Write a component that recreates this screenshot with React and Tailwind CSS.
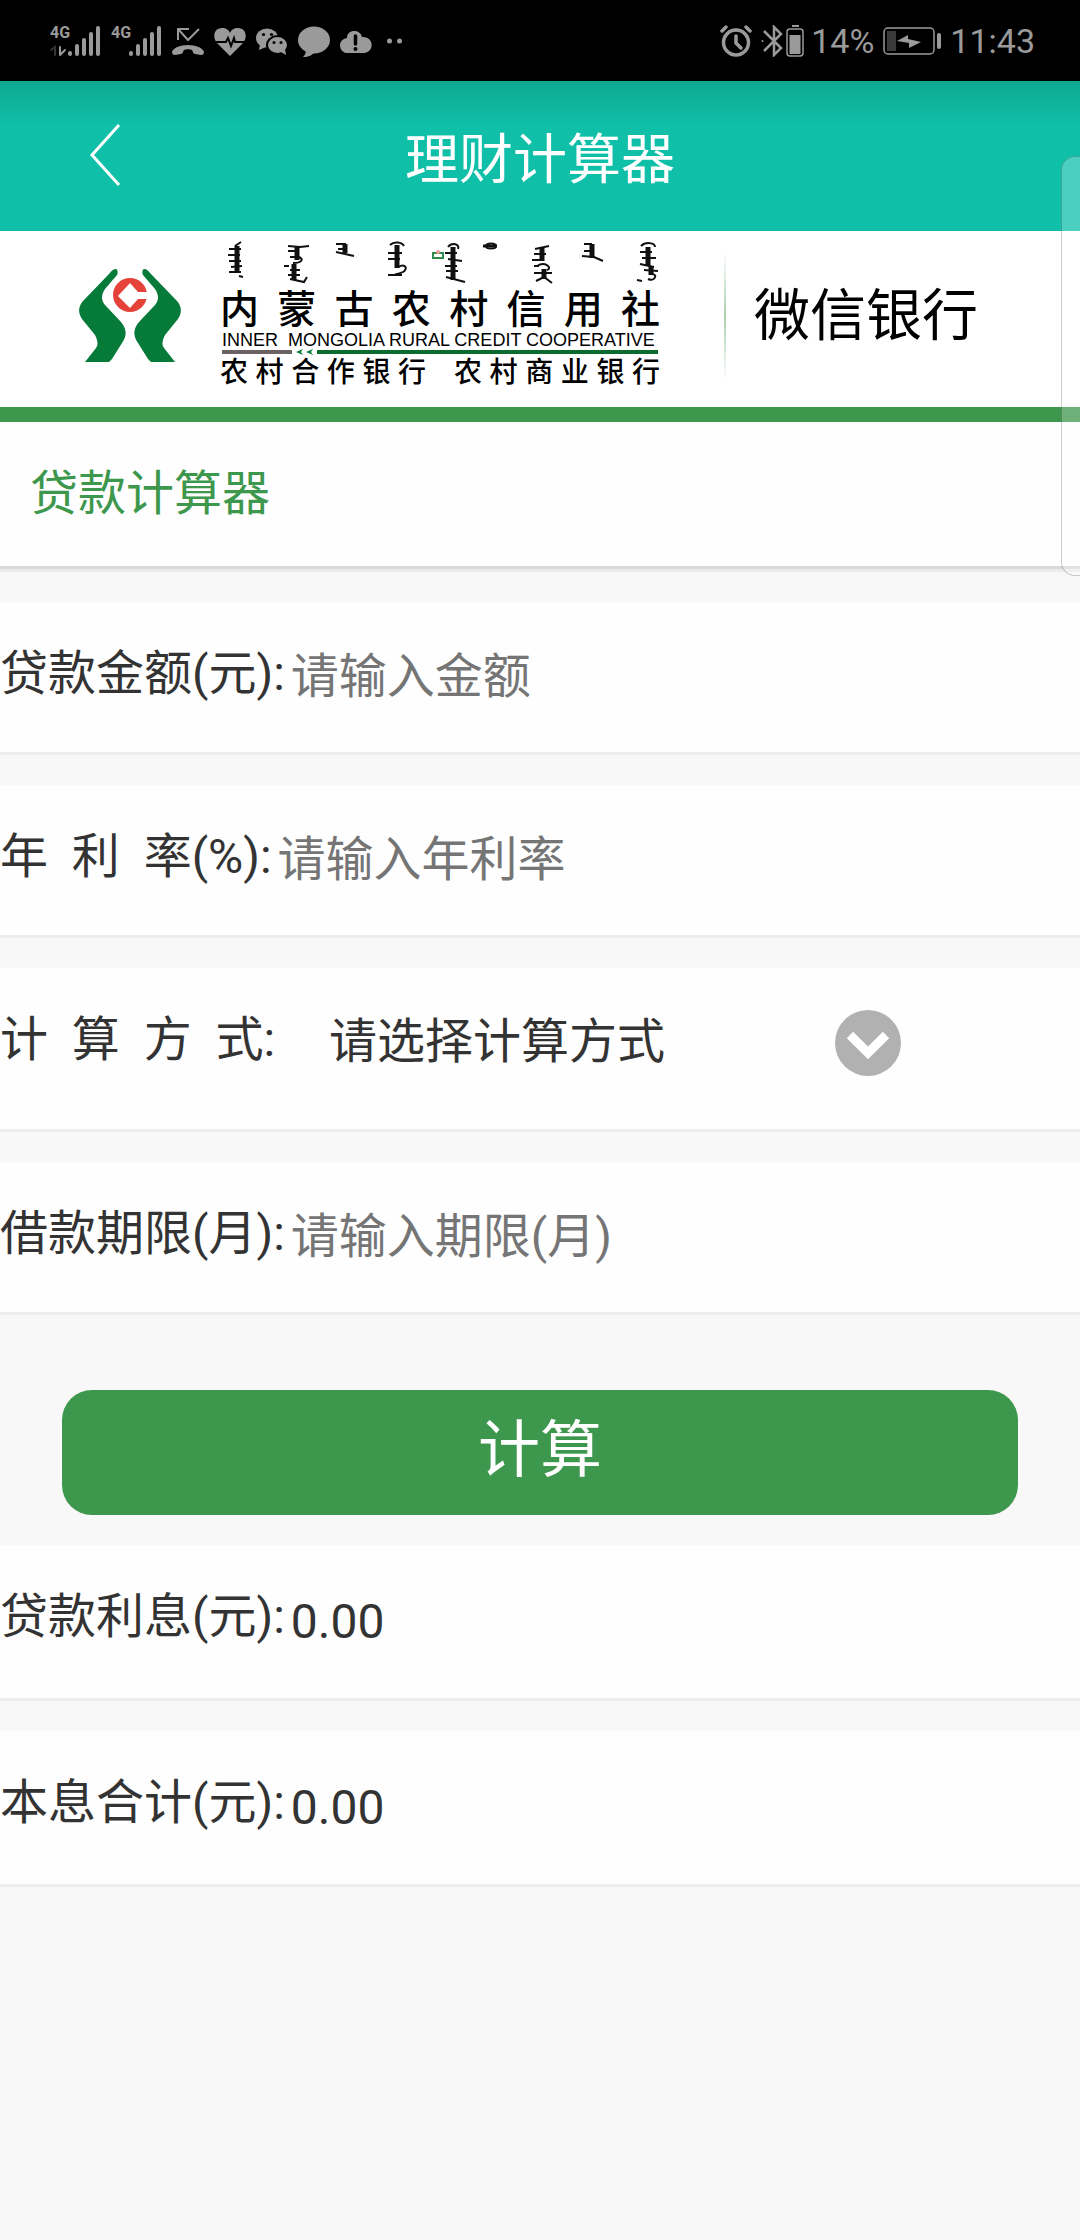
/**
 * 理财计算器 - 贷款计算页
 */

import { useState } from 'react'

const METHODS = ['请选择计算方式', '等额本息', '等额本金', '到期还本付息']

const BANK_NAME = ['内', '蒙', '古', '农', '村', '信', '用', '社']
const BANK_TYPES = ['农村合作银行', '农村商业银行']

function Signal({ data }) {
  return (
    <div className="relative h-[32px] w-[51px]">
      <span className="absolute left-0 top-0 text-[16px] leading-[16px] font-bold">4G</span>
      <svg viewBox="0 0 51 32" className="h-full w-full" stroke="currentColor" strokeWidth="4" strokeLinecap="round" fill="none">
        <path d="M20 29v-1M27 29V21M34 29V15M41 29V9M48 29V3" />
        {data && <path d="M10 22v8M10 30l5-5" strokeWidth="2" />}
        {data && <path d="M1 25l4-3v8" stroke="#333" strokeWidth="2" />}
      </svg>
    </div>
  )
}

function StatusBar() {
  return (
    <div className="flex h-[81px] items-center justify-between bg-black pr-[45px] pl-[50px] text-[#9a9a9a]">
      <div className="flex items-center gap-[10px]">
        <Signal data />
        <Signal />
        {/* 未接来电 */}
        <svg viewBox="0 0 32 32" className="size-[32px]">
          <path d="M17 4H6v11M6 4l10 11L27 4" fill="none" stroke="currentColor" strokeWidth="2" />
          <path d="M0 27C1 23 8 20 16 20s15 3 16 7c0 2-1 3-3 3l-6-1c-2 0-2-3-3-4-2-1-6-1-8 0-1 1-1 4-3 4l-6 1c-2 0-3-1-3-3z" fill="currentColor" />
        </svg>
        {/* 健康 */}
        <svg viewBox="0 0 32 32" className="size-[32px]">
          <path d="M16 31L3 18C-2 12 0 3 8 3c4 0 7 2 8 5 1-3 4-5 8-5 8 0 10 9 5 15z" fill="currentColor" />
          <path d="M2 17h10l2-4 3 8 3-8 1 4h10" fill="none" stroke="#000" strokeWidth="2" />
        </svg>
        {/* 微信 */}
        <svg viewBox="0 0 32 32" className="size-[32px]" fill="currentColor">
          <ellipse cx="11" cy="13" rx="11" ry="9.500" />
          <path d="M4 19l-1 6 7-3z" />
          <ellipse cx="21.500" cy="20" rx="10.500" ry="9" stroke="#000" strokeWidth="2" />
          <path d="M25 27l5 3-1-6z" />
          <g fill="#000">
            <circle cx="7.500" cy="9.500" r="1.600" />
            <circle cx="15.500" cy="9.500" r="1.600" />
            <circle cx="18" cy="17.500" r="1.500" />
            <circle cx="25" cy="17.500" r="1.500" />
          </g>
        </svg>
        {/* 短信 */}
        <svg viewBox="0 0 32 32" className="size-[32px]" fill="currentColor">
          <ellipse cx="16" cy="15" rx="16" ry="13.500" />
          <path d="M8 24c0 4-1 6-3 8 6 0 9-2 12-5z" />
        </svg>
        {/* 云端提醒 */}
        <svg viewBox="0 0 32 32" className="size-[32px]">
          <path d="M8 28a7.500 7.500 0 0 1-1-15C7 4 20 4 22 12c12-1 13 15 2 16z" fill="currentColor" />
          <path d="M15.500 11v8" stroke="#000" strokeWidth="3.500" strokeLinecap="round" />
          <circle cx="15.500" cy="24" r="2" fill="#000" />
        </svg>
        <svg viewBox="0 0 32 32" className="size-[32px]" fill="currentColor">
          <circle cx="7.500" cy="16" r="2.500" />
          <circle cx="17.500" cy="16" r="2.500" />
        </svg>
      </div>

      <div className="flex items-center text-[34px] leading-[40px]">
        <svg viewBox="0 0 32 32" className="mr-[9px] size-[32px]" fill="none" stroke="currentColor" strokeWidth="3.500" strokeLinecap="round">
          <circle cx="16" cy="17.500" r="12.500" />
          <path d="M16 11v7l5 5M2 6l4-4M30 6l-4-4" />
        </svg>
        <svg viewBox="0 0 44 32" className="mr-[6px] h-[32px] w-[44px]" fill="none" stroke="currentColor" strokeWidth="2.500">
          <path d="M3 6l17 17-7 7V2l7 7L3 26" />
          <circle cx="1.500" cy="16" r="1" fill="currentColor" stroke="none" />
          <rect x="26" y="4" width="16" height="27" rx="3" strokeWidth="1.500" />
          <rect x="28.500" y="10" width="11" height="19" fill="currentColor" stroke="none" />
          <path d="M31 1h7" strokeWidth="2" />
        </svg>
        <span>14%</span>
        <svg viewBox="0 0 58 28" className="mr-[9px] ml-[9px] h-[28px] w-[58px]" fill="none" stroke="currentColor">
          <rect x="1" y="1" width="50" height="26" rx="4" strokeWidth="1.500" />
          <rect x="4" y="4" width="9" height="20" fill="#3a3a3a" stroke="none" />
          <path d="M14 14l11-6v4l13 3-12 6v-5z" fill="currentColor" stroke="none" />
          <path d="M56 8v12" strokeWidth="4" strokeLinecap="round" />
        </svg>
        <span>11:43</span>
      </div>
    </div>
  )
}

// 标志上方的一排装饰笔画
function Ornament() {
  return (
    <svg viewBox="0 0 440 46" className="h-[46px] w-full" fill="none" stroke="#111" strokeWidth="2">
      <g strokeWidth="5">
        <path d="M17 5v27M77 5v14M74 23v16M125 3v9M177 4v23M233 6v33M322 6v14M324 28v10M372 3v14M428 6v19M431 26v8" />
      </g>
      <path d="M15 5l6-4M9 8h12M8 14h12M9 20h12M11 26l11-1M9 31h12M19 35l4 1" />
      <path d="M68 5l12 1 9-1M68 10h10M70 16h9c5 2 3 6-6 6M64 25h5M70 29h10M68 34h12M70 38l14 3 3-5" />
      <path d="M116 3h10M118 8h8M116 11l18 4" />
      <path d="M170 4c4-4 12-3 14 1M168 12h14M168 18h12M178 26c8-4 10 2 5 5s-9 1-9 4M168 34h14" />
      <path d="M228 6c4-5 12-3 10 2M225 12h12M228 18l14 2M225 25h12M226 30h12M226 36l19 5" />
      <ellipse cx="271" cy="5" rx="5" ry="2.500" />
      <path d="M263 5h14" strokeWidth="3" />
      <path d="M315 8l14-3M314 13h12M312 19h12M317 25c8-5 16 2 10 4M314 32h18M316 40l8-4 8 6M314 25h5" />
      <path d="M364 3h8M364 10h8M362 15l12 1 9 4" />
      <path d="M421 5c5-5 14-3 14 1M420 11h12M422 17h14M420 23l14 3M424 29l14 1M432 33c6 0 3 8-4 5M417 39l5 1" />
      <path d="M213 12h10v5h-10z" stroke="#2f8a4c" />
      <circle cx="218" cy="11" r="2" fill="#e8a090" stroke="none" />
    </svg>
  )
}

function BankBanner() {
  return (
    <div className="flex h-[191px] items-center border-b-[15px] border-[#3d974d] bg-white pb-[6px] pl-[79px] text-black">
      <svg viewBox="0 0 102 94" className="h-[94px] w-[102px] shrink-0">
        <path
          d="M37 0c2 1 2 4 1 6L26 20c-4 6-4 11 0 16l16 17c6 7 6 14 1 21L33 90l-3 3H6l11-14c3-4 1-9-1-13L3 50c-4-6-4-12 1-18L30 5c3-4 5-5 7-5z"
          fill="#067a38"
        />
        <path
          d="M65 0c-2 1-2 4-1 6l12 14c4 6 4 11 0 16L60 53c-6 7-6 14-1 21l10 16 3 3h24L85 79c-3-4-1-9 1-13l13-16c4-6 4-12-1-18L72 5c-3-4-5-5-7-5z"
          fill="#067a38"
        />
        <circle cx="51" cy="26" r="17" fill="#e5423a" />
        <path d="M51 14l8 9h11v7H59l-8 9-12-12z" fill="#fff" />
      </svg>

      <div className="ml-[39px] flex w-[440px] shrink-0 flex-col">
        <Ornament />
        <div className="mt-[2px] flex justify-between text-[39px] leading-[42px] font-medium">
          {BANK_NAME.map((c, i) => <span key={i}>{c}</span>)}
        </div>
        <div className="pl-[2px] font-['Liberation_Sans'] text-[18px] leading-[18px] whitespace-pre">
          INNER  MONGOLIA RURAL CREDIT COOPERATIVE
        </div>
        <div className="flex items-center px-[2px]">
          <div className="h-[4px] w-[70px] bg-[#6b6362]" />
          <svg viewBox="0 0 25 6" className="h-[6px] w-[25px]" fill="#067a38">
            <path d="M4 3l7-3-2 3 2 3zM14 3l7-3-2 3 2 3z" />
          </svg>
          <div className="h-[4px] flex-1 bg-[#0b6b2e]" />
        </div>
        <div className="flex justify-between text-[28px] leading-[36px] font-medium">
          {BANK_TYPES.map((name) => (
            <div key={name} className="flex w-[206px] justify-between">
              {[...name].map((c) => <span key={c}>{c}</span>)}
            </div>
          ))}
        </div>
      </div>

      <div className="ml-[64px] h-[130px] w-[2px] shrink-0 bg-linear-to-b from-white via-[#a9cfae] to-white" />
      <div className="ml-[28px] text-[56px] leading-[80px] whitespace-nowrap">微信银行</div>
    </div>
  )
}

function Row({ id, label, children }) {
  return (
    <div className="flex min-h-[153px] items-start gap-[6px] border-b-3 border-[#ededed] bg-[#fefefe]">
      <label htmlFor={id} className="shrink-0 leading-[144px] whitespace-pre">{label}</label>
      {children}
    </div>
  )
}

function NumberField({ id, label, placeholder, value, onChange }) {
  return (
    <Row id={id} label={label}>
      <input
        id={id}
        inputMode="decimal"
        value={value}
        onChange={(e) => onChange(e.target.value)}
        placeholder={placeholder}
        className="h-[148px] min-w-0 flex-1 bg-transparent outline-none placeholder:text-[#757575]"
      />
    </Row>
  )
}

function Result({ id, label, value }) {
  return (
    <div className="flex items-start gap-[6px] border-b-3 border-[#ededed] bg-[#fefefe]">
      <label htmlFor={id} className="leading-[144px]">{label}</label>
      <output id={id} className="leading-[153px]">{value.toFixed(2)}</output>
    </div>
  )
}

export default function App() {
  const [amount, setAmount] = useState('')
  const [rate, setRate] = useState('')
  const [months, setMonths] = useState('')
  const [method, setMethod] = useState(METHODS[0])
  const [interest, setInterest] = useState(0)
  const [total, setTotal] = useState(0)

  const calculate = (e) => {
    e.preventDefault()
    const p = Number(amount) || 0
    const n = Number(months) || 0
    const r = (Number(rate) || 0) / 1200
    let sum = r * p * n
    if (method === '等额本息' && r > 0 && n > 0) sum = (p * r * n) / (1 - (1 + r) ** -n) - p
    if (method === '等额本金') sum = (p * r * (n + 1)) / 2
    setInterest(sum)
    setTotal(p + sum)
  }

  return (
    <div className="relative min-h-screen bg-[#f8f8f8] font-[Roboto,'Noto_Sans_CJK_SC',sans-serif] text-[48px] text-[#333]">
      <StatusBar />

      <header className="grid h-[150px] grid-cols-[1fr_auto_1fr] items-center bg-[#0fbfa8] bg-linear-to-b from-[#0ea791] to-[#0fbfa8] to-30% text-white">
        <button type="button" aria-label="返回" className="ml-[88px] w-[34px]">
          <svg viewBox="0 0 34 64" className="h-[64px] w-[34px]" fill="none" stroke="currentColor" strokeWidth="3">
            <path d="M31 1L4 31l27 30" />
          </svg>
        </button>
        <h1 className="pt-[10px] text-[54px] leading-[72px] font-normal">理财计算器</h1>
      </header>

      <BankBanner />

      <h2 className="border-b-3 border-[#d9d9d9] bg-[#fefefe] pl-[30px] leading-[144px] text-[#3d974d] shadow-[0_3px_0_#ebebeb]">
        贷款计算器
      </h2>

      <form onSubmit={calculate} className="mt-[33px]">
        <div className="flex flex-col gap-[30px]">
          <NumberField id="amount" label="贷款金额(元):" placeholder="请输入金额" value={amount} onChange={setAmount} />
          <NumberField id="rate" label={'年\u00a0\u00a0利\u00a0\u00a0率(%):'} placeholder="请输入年利率" value={rate} onChange={setRate} />
          <Row id="method" label={'计\u00a0\u00a0算\u00a0\u00a0方\u00a0\u00a0式:'}>
            <div className="relative ml-[48px] h-[161px] w-[53%]">
              <select
                id="method"
                value={method}
                onChange={(e) => setMethod(e.target.value)}
                className="h-[148px] w-full appearance-none bg-transparent outline-none"
              >
                {METHODS.map((m) => <option key={m}>{m}</option>)}
              </select>
              <svg viewBox="0 0 66 66" className="pointer-events-none absolute top-[42px] right-0 size-[66px]">
                <circle cx="33" cy="33" r="33" fill="#b1b1b1" />
                <path d="M15 25l18 18 18-18" fill="none" stroke="#fff" strokeWidth="9" />
              </svg>
            </div>
          </Row>
          <NumberField id="months" label="借款期限(月):" placeholder="请输入期限(月)" value={months} onChange={setMonths} />
        </div>

        <div className="mt-[75px] px-[62px]">
          <button type="submit" className="block h-[125px] w-full rounded-[30px] bg-[#3d974d] pb-[4px] text-[62px] leading-[80px] text-white">
            计算
          </button>
        </div>
      </form>

      <div className="mt-[30px] flex flex-col gap-[30px]">
        <Result id="interest" label="贷款利息(元):" value={interest} />
        <Result id="total" label="本息合计(元):" value={total} />
      </div>

      {/* 侧边悬浮面板的边缘 */}
      <div className="pointer-events-none absolute top-[156px] right-0 h-[420px] w-[19px] rounded-l-[14px] border border-r-0 border-black/20 bg-white/25" />
    </div>
  )
}
